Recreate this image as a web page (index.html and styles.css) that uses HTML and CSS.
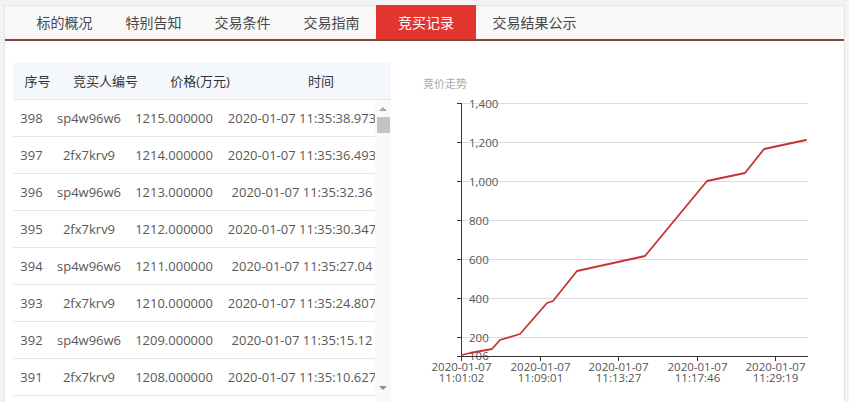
FILE: index.html
```html
<!DOCTYPE html>
<html lang="zh-CN">
<head>
<meta charset="utf-8">
<title>竞买记录</title>
<link rel="stylesheet" href="styles.css">
</head>
<body>
<div class="panel">
  <div class="tabs">
    <div class="tab">标的概况</div>
    <div class="tab">特别告知</div>
    <div class="tab">交易条件</div>
    <div class="tab">交易指南</div>
    <div class="tab active">竞买记录</div>
    <div class="tab">交易结果公示</div>
  </div>
  <div class="content">
    <div class="grid">
      <div class="ghead">
        <div class="hc h1">序号</div>
        <div class="hc h2">竞买人编号</div>
        <div class="hc h3">价格(万元)</div>
        <div class="hc h4">时间</div>
      </div>
      <div class="gbody">
        <div class="rows">
          <div class="row"><div class="c c1">398</div><div class="c c2">sp4w96w6</div><div class="c c3">1215.000000</div><div class="c c4">2020-01-07 11:35:38.973</div></div>
          <div class="row"><div class="c c1">397</div><div class="c c2">2fx7krv9</div><div class="c c3">1214.000000</div><div class="c c4">2020-01-07 11:35:36.493</div></div>
          <div class="row"><div class="c c1">396</div><div class="c c2">sp4w96w6</div><div class="c c3">1213.000000</div><div class="c c4">2020-01-07 11:35:32.36</div></div>
          <div class="row"><div class="c c1">395</div><div class="c c2">2fx7krv9</div><div class="c c3">1212.000000</div><div class="c c4">2020-01-07 11:35:30.347</div></div>
          <div class="row"><div class="c c1">394</div><div class="c c2">sp4w96w6</div><div class="c c3">1211.000000</div><div class="c c4">2020-01-07 11:35:27.04</div></div>
          <div class="row"><div class="c c1">393</div><div class="c c2">2fx7krv9</div><div class="c c3">1210.000000</div><div class="c c4">2020-01-07 11:35:24.807</div></div>
          <div class="row"><div class="c c1">392</div><div class="c c2">sp4w96w6</div><div class="c c3">1209.000000</div><div class="c c4">2020-01-07 11:35:15.12</div></div>
          <div class="row"><div class="c c1">391</div><div class="c c2">2fx7krv9</div><div class="c c3">1208.000000</div><div class="c c4">2020-01-07 11:35:10.627</div></div>
        </div>
        <div class="vscroll">
          <div class="arrow up"></div>
          <div class="thumb"></div>
          <div class="track"></div>
          <div class="arrow down"></div>
        </div>
      </div>
    </div>
    <svg class="chart" viewBox="391 41 453 361" width="453" height="361" xmlns="http://www.w3.org/2000/svg">
      <text class="ctitle" x="423" y="88">竞价走势</text>
      <g class="gridlines">
        <line x1="462" y1="103.5" x2="808" y2="103.5"/>
        <line x1="462" y1="142.5" x2="808" y2="142.5"/>
        <line x1="462" y1="181.5" x2="808" y2="181.5"/>
        <line x1="462" y1="220.5" x2="808" y2="220.5"/>
        <line x1="462" y1="259.5" x2="808" y2="259.5"/>
        <line x1="462" y1="298.5" x2="808" y2="298.5"/>
        <line x1="462" y1="337.5" x2="808" y2="337.5"/>
      </g>
      <g class="axis">
        <line x1="461.5" y1="103" x2="461.5" y2="357"/>
        <line x1="461" y1="356.5" x2="808" y2="356.5"/>
        <line x1="457" y1="103.5" x2="461.5" y2="103.5"/>
        <line x1="457" y1="142.5" x2="461.5" y2="142.5"/>
        <line x1="457" y1="181.5" x2="461.5" y2="181.5"/>
        <line x1="457" y1="220.5" x2="461.5" y2="220.5"/>
        <line x1="457" y1="259.5" x2="461.5" y2="259.5"/>
        <line x1="457" y1="298.5" x2="461.5" y2="298.5"/>
        <line x1="457" y1="337.5" x2="461.5" y2="337.5"/>
        <line x1="457" y1="356.5" x2="461.5" y2="356.5"/>
        <line x1="461.5" y1="356" x2="461.5" y2="361"/>
        <line x1="540.5" y1="356" x2="540.5" y2="361"/>
        <line x1="618.5" y1="356" x2="618.5" y2="361"/>
        <line x1="697.5" y1="356" x2="697.5" y2="361"/>
        <line x1="775.5" y1="356" x2="775.5" y2="361"/>
      </g>
      <g class="ylab">
        <text x="469" y="107.5">1,400</text>
        <text x="469" y="146.5">1,200</text>
        <text x="469" y="185.5">1,000</text>
        <text x="469" y="224.5">800</text>
        <text x="469" y="263.5">600</text>
        <text x="469" y="302.5">400</text>
        <text x="469" y="341.5">200</text>
        <text x="469" y="360">106</text>
      </g>
      <line class="xaxis-over" x1="461" y1="356.5" x2="500" y2="356.5"/>
      <g class="xlab">
        <text x="461.5" y="371">2020-01-07</text><text x="461.5" y="382">11:01:02</text>
        <text x="540.5" y="371">2020-01-07</text><text x="540.5" y="382">11:09:01</text>
        <text x="618.5" y="371">2020-01-07</text><text x="618.5" y="382">11:13:27</text>
        <text x="697.5" y="371">2020-01-07</text><text x="697.5" y="382">11:17:46</text>
        <text x="775.5" y="371">2020-01-07</text><text x="775.5" y="382">11:29:19</text>
      </g>
      <polyline class="series" points="462,355 470,353 492,349 500,340 520,334 547,303 553,301 577,271 645,256 707,181 745,173 764,149 806,140"/>
    </svg>
  </div>
</div>
</body>
</html>
```
FILE: styles.css
```css
html, body {
  margin: 0;
  padding: 0;
  height: 402px;
  overflow: hidden;
}
body {
  background: #f3f3f3;
  font-family: "Open Sans", "Noto Sans CJK SC", sans-serif;
}
.panel {
  margin: 5px 0 0 4px;
  width: 839px;
  height: 400px;
  background: #fff;
  border-left: 1px solid #e4e4e4;
  border-right: 1px solid #e4e4e4;
}
.tabs {
  display: flex;
  height: 33px;
  padding-left: 15px;
  background: #f8f8f8;
  border-top: 1px solid #e6e6e6;
  border-bottom: 2px solid #84463f;
}
.tab {
  padding: 0 16.5px;
  line-height: 33px;
  font-family: "Noto Sans CJK SC", sans-serif;
  font-size: 14px;
  color: #484848;
  white-space: nowrap;
}
.tab.active {
  margin-top: -1px;
  padding: 0 22px;
  line-height: 34px;
  background: #e1352d;
  color: #fff;
}
.content {
  display: flex;
  padding-left: 8px;
}
.grid {
  width: 378px;
  margin-top: 22px;
}
.ghead {
  display: flex;
  height: 36px;
  background: #f4f7fb;
  border-bottom: 1px solid #e6e8ec;
}
.hc {
  line-height: 36px;
  text-align: center;
  font-size: 13px;
  color: #333;
  white-space: nowrap;
}
.h1 { width: 49px; }
.h2 { width: 87px; }
.h3 { width: 102px; }
.h4 { width: 140px; }
.gbody {
  display: flex;
  height: 302px;
}
.rows {
  width: 362px;
  overflow: hidden;
}
.row {
  display: flex;
  height: 36px;
  border-bottom: 1px solid #e8e8e8;
}
.c {
  flex: none;
  line-height: 36px;
  text-align: center;
  font-size: 13px;
  color: #595959;
  white-space: nowrap;
}
.c1 { width: 37px; }
.c2 { width: 78px; }
.c3 { width: 92px; }
.c4 { width: 164px; }
.vscroll {
  display: flex;
  flex-direction: column;
  align-items: center;
  width: 16px;
  background: #f9f9f9;
}
.arrow {
  width: 0;
  height: 0;
  border-left: 4px solid transparent;
  border-right: 4px solid transparent;
}
.arrow.up {
  margin-top: 7px;
  border-bottom: 4px solid #a8a8a8;
}
.thumb {
  margin-top: 6px;
  width: 13px;
  height: 16px;
  background: #c3c3c3;
}
.track {
  flex: 1;
}
.arrow.down {
  margin-bottom: 12px;
  border-top: 4px solid #8e8e8e;
}
.chart {
  display: block;
  flex: none;
}
.ctitle {
  font-family: "Noto Sans CJK SC", sans-serif;
  font-size: 11px;
  fill: #a8a8a8;
}
.gridlines line {
  stroke: #dedede;
  stroke-width: 1;
}
.axis line {
  stroke: #333;
  stroke-width: 1;
}
.ylab text {
  font-family: "Open Sans", sans-serif;
  font-size: 11.5px;
  fill: #555;
}
.xaxis-over {
  stroke: #333;
  stroke-width: 1;
}
.xlab text {
  font-family: "Open Sans", sans-serif;
  font-size: 11.5px;
  fill: #555;
  text-anchor: middle;
}
.series {
  fill: none;
  stroke: #c23531;
  stroke-width: 1.8;
  stroke-linejoin: round;
  stroke-linecap: round;
}
```
